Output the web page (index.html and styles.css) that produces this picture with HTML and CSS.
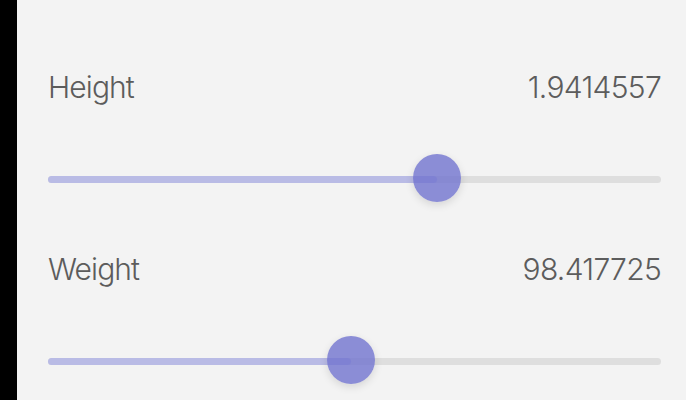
FILE: index.html
```html
<!DOCTYPE html>
<html>
<head>
  <meta charset="UTF-8">
  <title>Body Measurements</title>
  <link rel="stylesheet" href="styles.css">
</head>
<body>
  <div class="screen">
    <div class="edge"></div>
    <div class="panel">
      <div class="field">
        <div class="field-row">
          <span class="label">Height</span>
          <span class="value">1.9414557</span>
        </div>
        <div class="slider">
          <div class="track"></div>
          <div class="track-fill" style="width: 63.5%"></div>
          <div class="thumb" style="left: 63.5%"></div>
        </div>
      </div>

      <div class="field">
        <div class="field-row">
          <span class="label">Weight</span>
          <span class="value">98.417725</span>
        </div>
        <div class="slider">
          <div class="track"></div>
          <div class="track-fill" style="width: 49.4%"></div>
          <div class="thumb" style="left: 49.4%"></div>
        </div>
      </div>
    </div>
  </div>
</body>
</html>
```

FILE: styles.css
```css
html, body {
  margin: 0;
  padding: 0;
  height: 100%;
}
body {
  background-color: #f3f3f3;
  font-family: Inter, "Noto Sans", sans-serif;
  overflow: hidden;
}
.screen {
  display: flex;
  height: 100%;
}
.edge {
  width: 17px;
  flex-shrink: 0;
  background-color: #000;
}
.panel {
  flex: 1;
  padding: 69px 25px 0 31px;
  display: flex;
  flex-direction: column;
  gap: 49px;
}
.field {
  display: flex;
  flex-direction: column;
  gap: 49px;
}
.field-row {
  display: flex;
  justify-content: space-between;
  align-items: baseline;
  font-size: 30px;
  line-height: 36px;
  font-weight: 300;
  letter-spacing: -0.9px;
  color: #5c5c5c;
}
.value {
  letter-spacing: -0.7px;
}
.slider {
  position: relative;
  height: 48px;
}
.track,
.track-fill {
  position: absolute;
  top: 22px;
  left: 0;
  height: 7px;
  border-radius: 4px;
}
.track {
  right: 0;
  background-color: #dedede;
}
.track-fill {
  background-color: #b9bbe5;
}
.thumb {
  position: absolute;
  top: 0;
  width: 48px;
  height: 48px;
  margin-left: -24px;
  border-radius: 50%;
  background-color: rgba(112, 115, 206, 0.8);
  box-shadow: 0 3px 8px rgba(0, 0, 0, 0.12);
}
```
